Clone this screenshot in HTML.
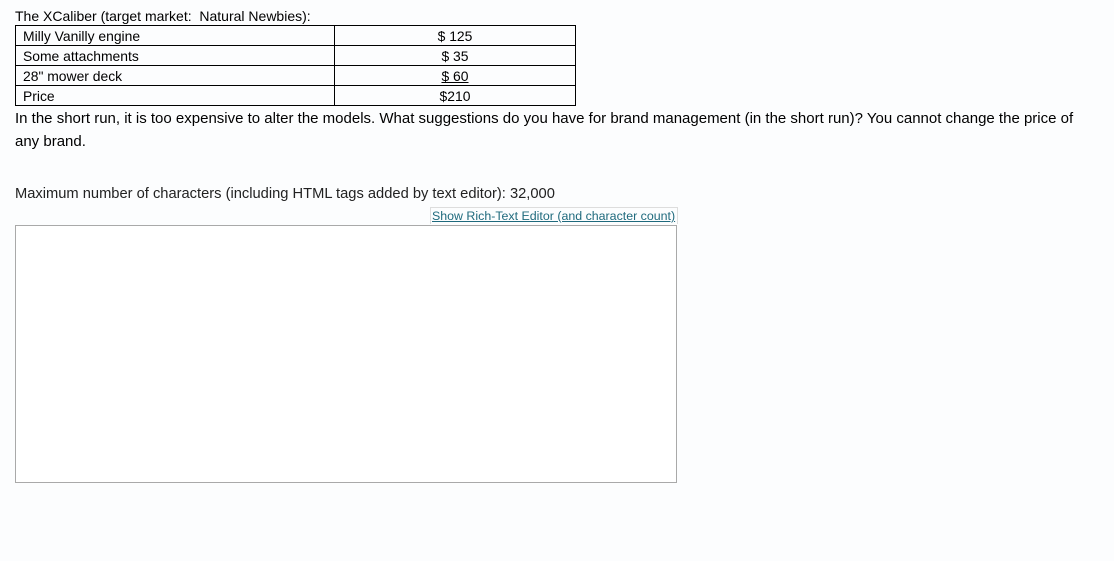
<!DOCTYPE html>
<html><head><style>
body{margin:0;background:#fcfdfe;font-family:"Liberation Sans",Arial,sans-serif;color:#000;}
.t{position:absolute;font-size:14px;line-height:16px;white-space:nowrap}
table{position:absolute;left:15px;top:25px;border-collapse:collapse;font-size:13.9px;width:561px}
td{border:1px solid #000;height:19px;padding:0 0 0 7px;line-height:16px}
td.r{text-align:center;width:240px;padding:0}
</style></head><body>
<div class="t" style="left:15px;top:8px">The XCaliber (target market:&nbsp; Natural Newbies):</div>
<table>
<tr><td>Milly Vanilly engine</td><td class="r">$ 125</td></tr>
<tr><td>Some attachments</td><td class="r">$ 35</td></tr>
<tr><td>28" mower deck</td><td class="r"><u>$ 60</u></td></tr>
<tr><td>Price</td><td class="r">$210</td></tr>
</table>
<div class="t" style="left:15px;top:107px;font-size:15px;line-height:23px;white-space:normal;width:1080px">In the short run, it is too expensive to alter the models. What suggestions do you have for brand management (in the short run)? You cannot change the price of any brand.</div>
<div class="t" style="left:15px;top:186px;font-size:14.7px;color:#222">Maximum number of characters (including HTML tags added by text editor): 32,000</div>
<div style="position:absolute;left:430px;top:207px;width:246px;height:16px;border:1px solid #ddd;border-bottom:none;background:#fcfdfe"></div>
<div class="t" style="left:432px;top:208px;font-size:12.4px;color:#1f6a7d;text-decoration:underline">Show Rich-Text Editor (and character count)</div>
<div style="position:absolute;left:15px;top:225px;width:660px;height:256px;border:1px solid #a9a9a9;background:#fff"></div>
</body></html>
